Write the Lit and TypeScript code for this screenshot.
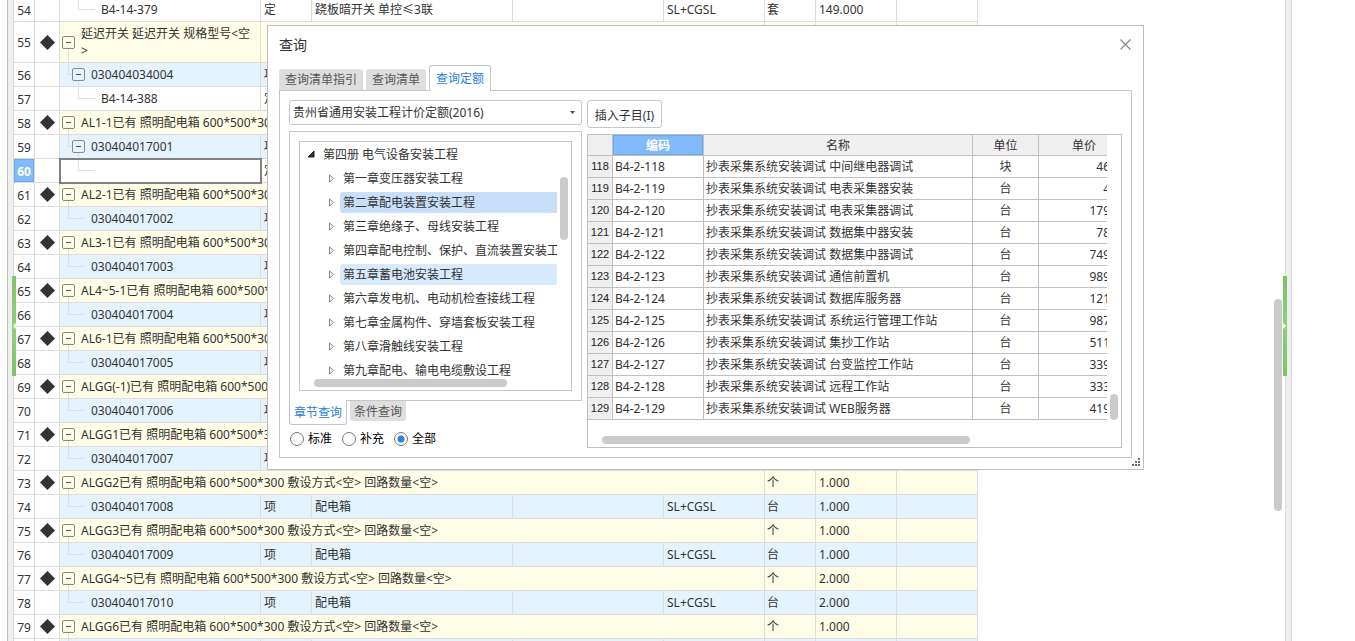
import { LitElement, html, css, svg, nothing } from "lit";
import { customElement, property, state } from "lit/decorators.js";
import { classMap } from "lit/directives/class-map.js";

type Kind = "group" | "list" | "leaf";
interface Row {
  no: number;
  kind: Kind;
  code: string;
  type?: string;
  name?: string;
  formula?: string;
  unit?: string;
  qty?: string;
  boxed?: boolean;
  wrap?: boolean;
  active?: boolean;
}

const group = (no: number, name: string, qty = "1.000"): Row => ({
  no, kind: "group", code: `${name}已有 照明配电箱 600*500*300 敷设方式<空> 回路数量<空>`, unit: "个", qty,
});
const list = (no: number, code: string, qty = "1.000"): Row => ({
  no, kind: "list", code, type: "项", name: "配电箱", formula: "SL+CGSL", unit: "台", qty,
});
const briefGroup = (no: number, name: string): Row => ({
  no, kind: "group", code: `${name}已有 照明配电箱 600*500*300`,
});
const briefList = (no: number, code: string, boxed = false): Row => ({
  no, kind: "list", code, type: "项", boxed,
});

const ROWS: Row[] = [
  { no: 54, kind: "leaf", code: "B4-14-379", type: "定", name: "跷板暗开关 单控≤3联", formula: "SL+CGSL", unit: "套", qty: "149.000" },
  { no: 55, kind: "group", code: "延迟开关 延迟开关 规格型号<空>", wrap: true },
  briefList(56, "030404034004", true),
  { no: 57, kind: "leaf", code: "B4-14-388", type: "定" },
  briefGroup(58, "AL1-1"),
  briefList(59, "030404017001", true),
  { no: 60, kind: "leaf", code: "", type: "定", active: true },
  briefGroup(61, "AL2-1"),
  briefList(62, "030404017002"),
  briefGroup(63, "AL3-1"),
  briefList(64, "030404017003"),
  briefGroup(65, "AL4~5-1"),
  briefList(66, "030404017004"),
  briefGroup(67, "AL6-1"),
  briefList(68, "030404017005"),
  briefGroup(69, "ALGG(-1)"),
  briefList(70, "030404017006"),
  briefGroup(71, "ALGG1"),
  briefList(72, "030404017007"),
  group(73, "ALGG2"),
  list(74, "030404017008"),
  group(75, "ALGG3"),
  list(76, "030404017009"),
  group(77, "ALGG4~5", "2.000"),
  list(78, "030404017010", "2.000"),
  group(79, "ALGG6"),
  { no: NaN, kind: "list", code: "" },
];

const CHAPTERS = [
  "第一章变压器安装工程",
  "第二章配电装置安装工程",
  "第三章绝缘子、母线安装工程",
  "第四章配电控制、保护、直流装置安装工程",
  "第五章蓄电池安装工程",
  "第六章发电机、电动机检查接线工程",
  "第七章金属构件、穿墙套板安装工程",
  "第八章滑触线安装工程",
  "第九章配电、输电电缆敷设工程",
];

const QUOTAS: [number, string, string, string][] = [
  [118, "中间继电器调试", "块", "46.00"],
  [119, "电表采集器安装", "台", "4.00"],
  [120, "电表采集器调试", "台", "179.00"],
  [121, "数据集中器安装", "台", "78.00"],
  [122, "数据集中器调试", "台", "749.00"],
  [123, "通信前置机", "台", "989.00"],
  [124, "数据库服务器", "台", "121.00"],
  [125, "系统运行管理工作站", "台", "987.00"],
  [126, "集抄工作站", "台", "511.00"],
  [127, "台变监控工作站", "台", "339.00"],
  [128, "远程工作站", "台", "333.00"],
  [129, "WEB服务器", "台", "419.00"],
];

const base = css`
  *, *::before, *::after { box-sizing: border-box; }
  button, select, input { font: inherit; color: inherit; margin: 0; }
  button { cursor: pointer; }
  h1, ul { margin: 0; padding: 0; font: inherit; list-style: none; }
  table { border-collapse: separate; border-spacing: 0; table-layout: fixed; }
  th, td { padding: 0; font-weight: normal; text-align: left; white-space: nowrap; overflow: hidden; }
  svg { display: block; flex: none; }
  .thumb { background: #cbcbcb; border-radius: 4px; }
`;

@customElement("bill-table")
class BillTable extends LitElement {
  static styles = [base, css`
    :host { display: block; overflow: hidden; }
    table { width: 964px; margin-top: -2px; }
    .c-no { width: 21px; } .c-mark { width: 25px; } .c-code { width: 201px; }
    .c-type { width: 51px; } .c-name { width: 201px; } .c-spec { width: 151px; }
    .c-formula { width: 101px; } .c-unit { width: 51px; } .c-qty { width: 81px; }
    td, th { height: 24px; line-height: 17px; border-right: 1px solid #dcdcdc; border-bottom: 1px solid #dcdcdc; padding-left: 3px; }
    .tall td, .tall th { height: 41px; }
    th { padding: 1px 0 0; text-align: center; }
    .mark { padding: 0 0 0 5px; }
    .unit { padding-left: 2px; }
    .group .fill { background: #fffde5; }
    .list .fill { background: #e5f3ff; }
    .code { padding: 0; }
    .tree { display: flex; align-items: center; }
    .tree svg { overflow: visible; }
    .wrap { white-space: normal; padding-right: 5px; }
    .active th { background: #80bafa; color: #fff; font-weight: bold; box-shadow: inset 0 0 0 1px #6aa9ef; }
    .active .code { outline: 2px solid #808080; outline-offset: -1px; }
  `];

  private glyph(r: Row) {
    const box = (x: number) => svg`
      <rect x=${x + 0.5} y="5.5" width="12" height="12" rx="1.5" fill="none" stroke="#8a8a8a"/>
      <path d=${`M${x + 4} 11.5h5`} stroke="#555"/>`;
    if (r.kind === "group")
      return html`<svg width="21" height="23"><path d="M8.5 18V60" stroke="#e0e0e0"/>${box(2)}</svg>`;
    if (r.kind === "list")
      return r.boxed
        ? html`<svg width="31" height="23"><path d="M8.5 0V11.5H12M18.5 18V23" fill="none" stroke="#e0e0e0"/>${box(12)}</svg>`
        : html`<svg width="31" height="23"><path d="M8.5 0V11.5H25" fill="none" stroke="#e0e0e0"/></svg>`;
    return html`<svg width="41" height="23"><path d="M18.5 0V11.5H35" fill="none" stroke="#e0e0e0"/></svg>`;
  }

  private row(r: Row) {
    const merged = r.kind === "group" && !r.wrap;
    return html`<tr class=${classMap({ [r.kind]: true, tall: !!r.wrap, active: !!r.active })}>
      <th scope="row">${Number.isNaN(r.no) ? nothing : r.no}</th>
      <td class="mark">${r.kind === "group"
        ? html`<svg width="15" height="15"><path d="M7.5 0L15 7.5L7.5 15L0 7.5Z" fill="#333"/></svg>` : nothing}</td>
      <td class="code fill" colspan=${merged ? 5 : 1}><div class="tree">${this.glyph(r)}<span class=${r.wrap ? "wrap" : ""}>${r.code}</span></div></td>
      ${merged ? nothing : html`
        ${r.wrap ? html`<td class="fill" colspan="4"></td>` : html`
          <td class="fill">${r.type}</td><td class="fill">${r.name}</td>
          <td class="fill"></td><td class="fill">${r.formula}</td>`}`}
      <td class="fill unit">${r.unit}</td><td class="fill">${r.qty}</td><td class="fill"></td>
    </tr>`;
  }

  render() {
    return html`<table>
      <colgroup><col class="c-no"><col class="c-mark"><col class="c-code"><col class="c-type"><col class="c-name"><col class="c-spec"><col class="c-formula"><col class="c-unit"><col class="c-qty"><col class="c-qty"></colgroup>
      <tbody>${ROWS.map((r) => this.row(r))}</tbody>
    </table>`;
  }
}

@customElement("chapter-tree")
class ChapterTree extends LitElement {
  @state() private selected = 1;
  @property({ type: Number }) hovered = 4;

  static styles = [base, css`
    :host { display: grid; grid-template-columns: 1fr 14px; grid-template-rows: 236px 12px; border: 1px solid #c4c6ca; }
    .items { overflow: hidden; white-space: nowrap; }
    .item { display: flex; height: 24px; padding: 2px 0 1px 8px; align-items: center; line-height: 21px; }
    .item.child { padding-left: 29px; }
    .arrow { width: 11px; }
    .label { flex: 1; min-width: 0; overflow: hidden; padding: 0 0 0 3px; border: 0; border-radius: 3px 0 0 3px; background: none; text-align: left; height: 21px; }
    .item.root .label { padding-left: 4px; }
    .label.selected { background: #c8dffa; }
    .label.hovered { background: #d8eafe; }
    .vbar { padding: 35px 3px 0; }
    .vbar .thumb { height: 63px; }
    .hbar { padding: 1px 50px 3px 14px; }
    .hbar .thumb { height: 8px; }
  `];

  render() {
    return html`
      <ul class="items">
        <li class="item root"><svg class="arrow" viewBox="0 0 11 11" height="11"><path d="M6 2V8H0Z" fill="#333" stroke="#222" stroke-linejoin="round"/></svg><button class="label">第四册 电气设备安装工程</button></li>
        ${CHAPTERS.map((c, i) => html`<li class="item child">
          <svg class="arrow" viewBox="0 0 11 11" height="11"><path d="M.5 2V9L4.5 5.5Z" fill="none" stroke="#888"/></svg>
          <button class=${classMap({ label: true, selected: i === this.selected, hovered: i === this.hovered })} @click=${() => (this.selected = i)}>${c}</button>
        </li>`)}
      </ul>
      <div class="vbar"><div class="thumb"></div></div>
      <div class="hbar"><div class="thumb"></div></div>`;
  }
}

@customElement("quota-grid")
class QuotaGrid extends LitElement {
  static styles = [base, css`
    :host { display: grid; grid-template-columns: minmax(0, 1fr) 14px; grid-template-rows: 285px 27px; border: 1px solid #bfc0c2; }
    .view { overflow: hidden; }
    table { width: 542px; }
    .c-no { width: 25px; } .c-code { width: 91px; } .c-name { width: 269px; } .c-unit { width: 66px; } .c-price { width: 91px; }
    th, td { height: 22px; line-height: 17px; border-right: 1px solid #c0c0c0; border-bottom: 1px solid #c0c0c0; padding-left: 2px; }
    thead th { height: 21px; background: #efefef; text-align: center; padding: 0; }
    thead .current { background: #80bafa; color: #fff; font-weight: bold; box-shadow: inset 0 0 0 1px #6aa9ef; }
    tbody th { background: #efefef; font-family: "Liberation Sans", sans-serif; font-size: 11px; color: #222; text-align: center; padding: 0; }
    .unit { text-align: center; padding: 0; }
    .price { text-align: right; padding: 0 2px 0 0; }
    .vbar { display: flex; align-items: flex-end; padding: 0 3px; }
    .vbar .thumb { flex: 1; height: 26px; }
    .hbar { padding: 16px 137px 0 14px; }
    .hbar .thumb { height: 8px; }
  `];

  render() {
    return html`
      <div class="view"><table>
        <colgroup><col class="c-no"><col class="c-code"><col class="c-name"><col class="c-unit"><col class="c-price"></colgroup>
        <thead><tr><th></th><th class="current">编码</th><th>名称</th><th>单位</th><th>单价</th></tr></thead>
        <tbody>${QUOTAS.map(([n, name, unit, price]) => html`<tr>
          <th scope="row">${n}</th><td>B4-2-${n}</td><td>抄表采集系统安装调试 ${name}</td><td class="unit">${unit}</td><td class="price">${price}</td>
        </tr>`)}</tbody>
      </table></div>
      <div class="vbar"><div class="thumb"></div></div>
      <div class="hbar"><div class="thumb"></div></div>`;
  }
}

@customElement("query-dialog")
class QueryDialog extends LitElement {
  @state() private scope = "全部";

  static styles = [base, css`
    :host { display: flex; flex-direction: column; background: #fff; border: 1px solid #bdbec0; padding: 0 11px 11px; line-height: 17px; }
    header { display: flex; height: 39px; align-items: center; justify-content: space-between; padding-bottom: 2px; }
    h1 { font-size: 14px; }
    .close { border: 0; background: none; padding: 0; width: 13px; height: 13px; }
    .tabs { display: flex; gap: 3px; align-items: flex-end; height: 26px; margin-bottom: -1px; z-index: 1; }
    .tab { border: 0; background: #dedede; color: #555; padding: 0 6px; height: 21px; margin-bottom: 1px; border-radius: 3px 3px 0 0; }
    .tab.on { height: 26px; margin: 0; background: #fff; color: #2a7fe0; border: 1px solid #c4c6ca; border-bottom: 0; }
    .panel { display: grid; grid-template-columns: 293px minmax(0, 1fr); gap: 5px; border: 1px solid #c4c6ca; padding: 9px; }
    .left { display: flex; flex-direction: column; }
    .combo { display: grid; grid-template-columns: 1fr 12px; align-items: center; margin-bottom: 6px; }
    .combo select { grid-area: 1 / 1 / 2 / 3; appearance: none; height: 25px; border: 1px solid #c4c6ca; border-radius: 3px; background: #fff; padding: 0 12px 0 3px; }
    .combo svg { grid-area: 1 / 2; pointer-events: none; }
    .frame { border: 1px solid #c4c6ca; padding: 9px; }
    .subtabs { display: flex; gap: 3px; align-items: flex-start; margin-top: -1px; }
    .subtab { border: 0; background: #dedede; color: #555; padding: 0 4px; height: 20px; margin-top: 1px; border-radius: 0 0 3px 3px; }
    .subtab.on { height: 25px; margin: 0; background: #fff; color: #2a7fe0; border: 1px solid #c4c6ca; border-top: 0; }
    .scopes { display: flex; gap: 10px; margin-top: 4px; padding-left: 1px; height: 19px; color: #000; }
    .scopes label { display: flex; gap: 4px; align-items: center; }
    .scopes input { appearance: none; width: 14px; height: 14px; border: 1px solid #777; border-radius: 50%; background: #fff; }
    .scopes input:checked { background: radial-gradient(circle, #2a7fe0 3px, #fff 4px); }
    .insert { align-self: flex-start; width: 75px; height: 28px; border: 1px solid #c4c6ca; border-radius: 3px; background: #fff; padding: 2px 0 0; margin-bottom: 6px; white-space: nowrap; }
    .right { display: flex; flex-direction: column; min-width: 0; }
    .grip { position: absolute; right: 2px; bottom: 2px; }
  `];

  render() {
    return html`
      <header>
        <h1>查询</h1>
        <button class="close" aria-label="关闭"><svg width="13" height="13"><path d="M1.5 1.5L11.5 11.5M11.5 1.5L1.5 11.5" stroke="#888" stroke-width="1.2"/></svg></button>
      </header>
      <nav class="tabs">
        <button class="tab">查询清单指引</button><button class="tab">查询清单</button><button class="tab on">查询定额</button>
      </nav>
      <section class="panel">
        <div class="left">
          <div class="combo">
            <select aria-label="定额库"><option>贵州省通用安装工程计价定额(2016)</option></select>
            <svg width="6" height="4"><path d="M0 0H5L2.5 3Z" fill="#444"/></svg>
          </div>
          <div class="frame"><chapter-tree></chapter-tree></div>
          <nav class="subtabs"><button class="subtab on">章节查询</button><button class="subtab">条件查询</button></nav>
          <div class="scopes">${["标准", "补充", "全部"].map((s) => html`
            <label><input type="radio" name="scope" .checked=${s === this.scope} @change=${() => (this.scope = s)}>${s}</label>`)}
          </div>
        </div>
        <div class="right">
          <button class="insert">插入子目(I)</button>
          <quota-grid></quota-grid>
        </div>
      </section>
      <svg class="grip" width="9" height="9"><path d="M0 6h2v2h-2zM3 6h2v2h-2zM6 6h2v2h-2zM3 3h2v2h-2zM6 3h2v2h-2zM6 0h2v2h-2z" fill="#6b7078"/></svg>`;
  }
}

@customElement("app-root")
class AppRoot extends LitElement {
  static styles = [base, css`
    :host { display: flex; position: relative; height: 100vh; overflow: hidden; padding: 0 63px 0 7px; background: #fff; color: #333;
      font: 12px/17px "Noto Sans", "Noto Sans CJK SC", sans-serif; }
    .splitter { position: relative; flex: none; width: 7px; background: #efefef; border-left: 1px solid #c0c0c0; border-right: 1px solid #d8d8d8; }
    .splitter.end { border-left-color: #dcdcdc; }
    .handle { position: absolute; top: 276px; left: 4px; width: 4px; height: 100px; background: linear-gradient(#7dc267, #90d07c 50%, #7dc267); z-index: 1; }
    .end .handle { left: -3px; }
    bill-table { flex: 1; min-width: 0; }
    .gutter { flex: none; width: 11px; padding: 299px 3px 0 0; }
    .gutter .thumb { height: 212px; }
    query-dialog { position: absolute; left: 267px; top: 25px; width: 877px; z-index: 2; }
  `];

  render() {
    return html`
      <div class="splitter"><svg class="handle" viewBox="0 0 4 100"><path d="M4 47L1 50L4 53Z" fill="#fff"/></svg></div>
      <bill-table></bill-table>
      <div class="gutter"><div class="thumb"></div></div>
      <div class="splitter end"><svg class="handle" viewBox="0 0 4 100"><path d="M0 47L3 50L0 53Z" fill="#fff"/></svg></div>
      <query-dialog></query-dialog>`;
  }
}
